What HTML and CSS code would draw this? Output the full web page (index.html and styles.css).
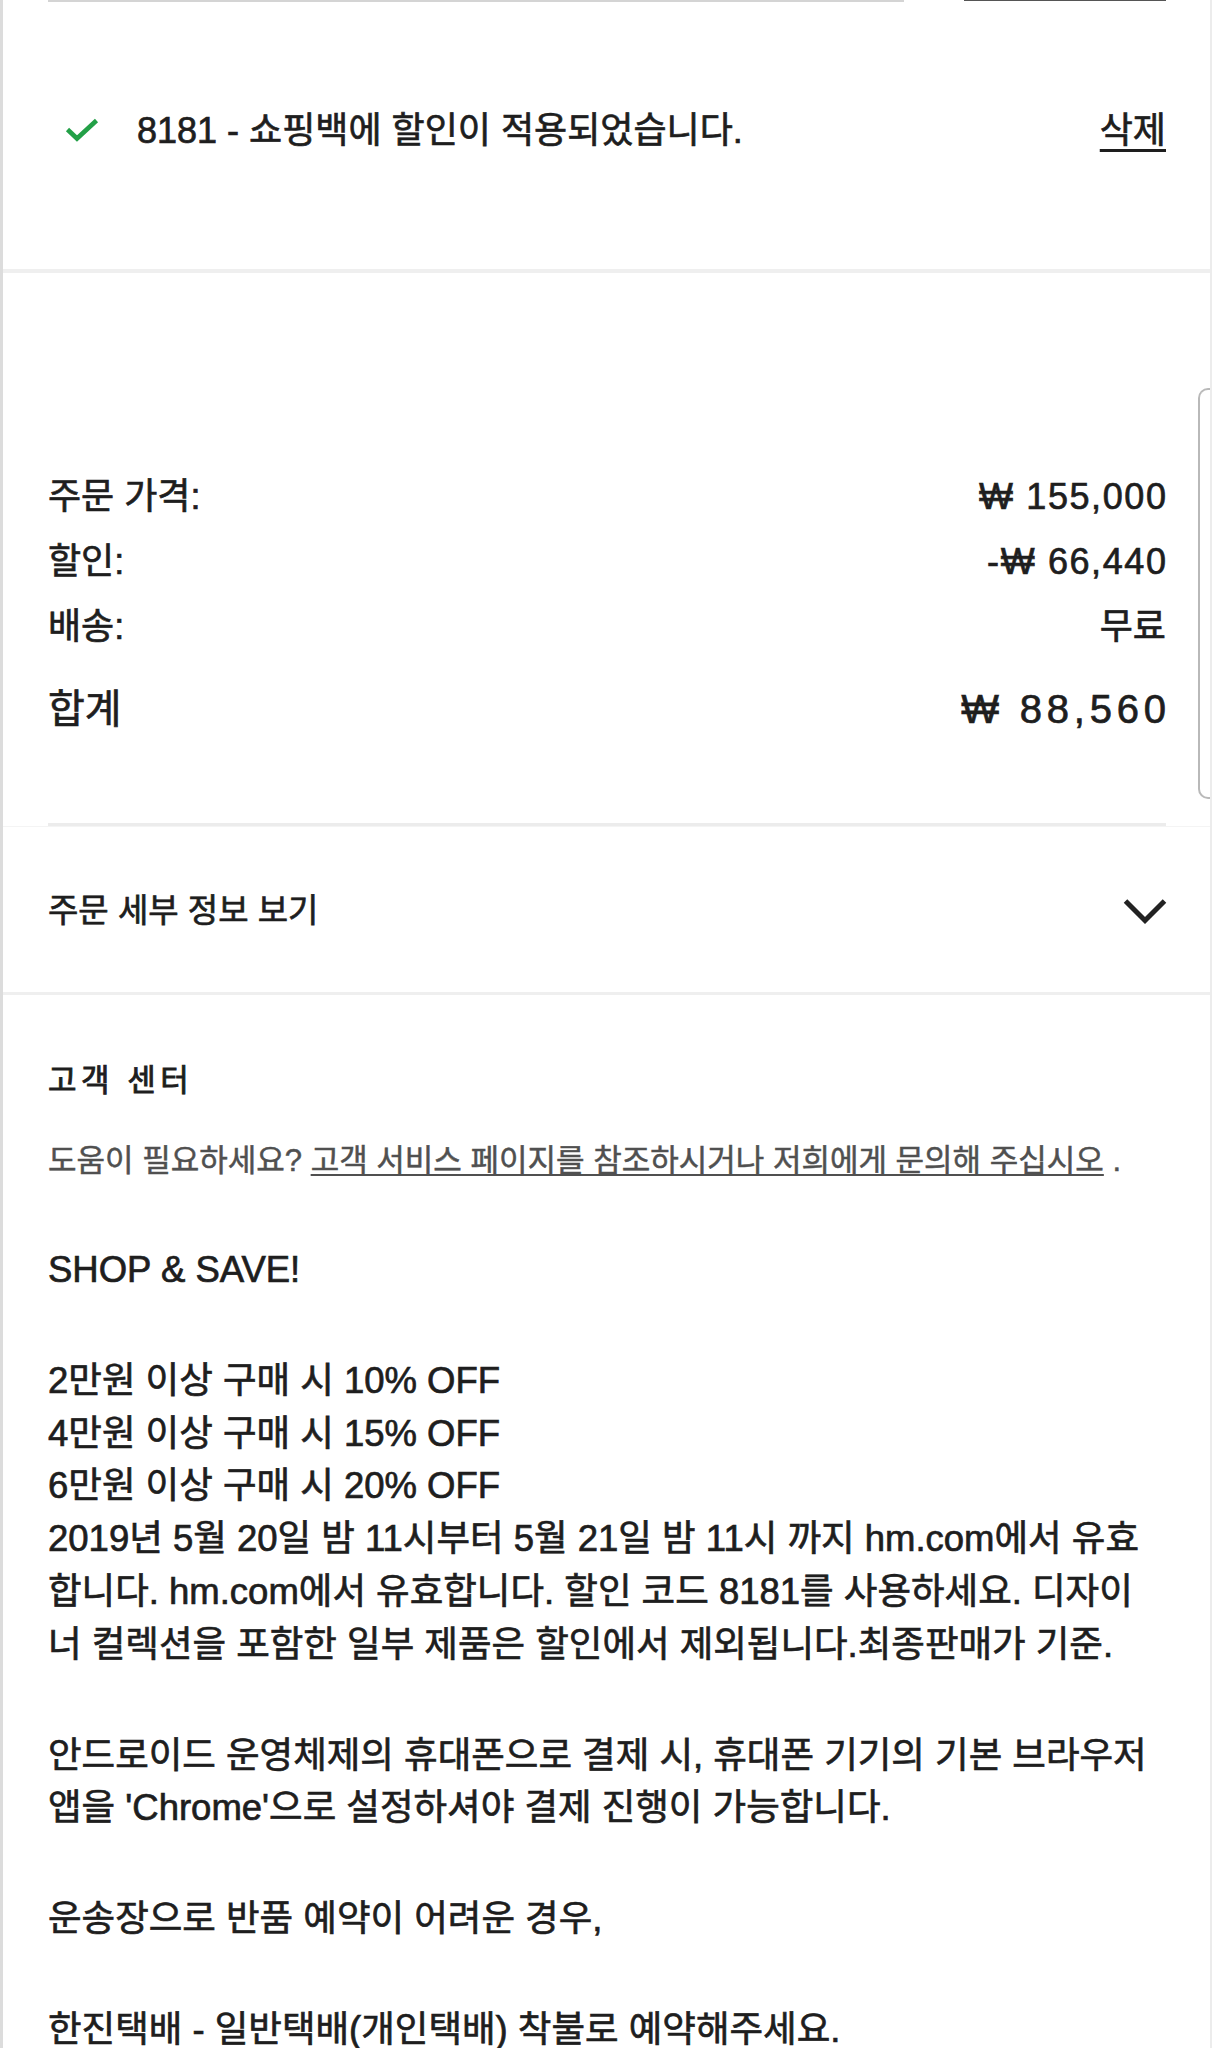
FILE: index.html
```html
<!DOCTYPE html>
<html lang="ko">
<head>
<meta charset="utf-8">
<title>H&amp;M 결제</title>
<link rel="stylesheet" href="styles.css">
</head>
<body>
<div class="page">
  <section class="coupon">
    <div class="top-edges">
      <div class="input-edge"></div>
      <div class="button-edge"></div>
    </div>
    <div class="coupon-row">
      <svg class="check" width="34" height="24" viewBox="0 0 34 24" aria-hidden="true">
        <polyline points="2.5,11.5 12,20.5 31.5,2.5" fill="none" stroke="#23a047" stroke-width="4.6" stroke-linecap="butt" stroke-linejoin="miter"/>
      </svg>
      <span class="coupon-msg">8181 - 쇼핑백에 할인이 적용되었습니다.</span>
      <a class="remove" href="#">삭제</a>
    </div>
  </section>

  <section class="summary">
    <div class="sum-row"><span>주문 가격:</span><span class="price">₩ 155,000</span></div>
    <div class="sum-row"><span>할인:</span><span class="price">-₩ 66,440</span></div>
    <div class="sum-row"><span>배송:</span><span>무료</span></div>
    <div class="sum-row total"><span>합계</span><span class="total-price">₩ 88,560</span></div>
    <div class="rule"></div>
  </section>

  <section class="details">
    <span class="details-label">주문 세부 정보 보기</span>
    <svg class="chevron" width="44" height="27" viewBox="0 0 44 27" aria-hidden="true">
      <polyline points="2.5,3 22,22.5 41.5,3" fill="none" stroke="#222" stroke-width="5"/>
    </svg>
  </section>

  <section class="help">
    <h2 class="help-title">고객 센터</h2>
    <p class="help-text">도움이 필요하세요? <a href="#" class="help-link">고객 서비스 페이지를 참조하시거나 저희에게 문의해 주십시오</a> .</p>
    <p class="para">SHOP &amp; SAVE!</p>
    <p class="para">2만원 이상 구매 시 10% OFF<br>4만원 이상 구매 시 15% OFF<br>6만원 이상 구매 시 20% OFF<br>2019년 5월 20일 밤 11시부터 5월 21일 밤 11시 까지 hm.com에서 유효<br>합니다. hm.com에서 유효합니다. 할인 코드 8181를 사용하세요. 디자이<br>너 컬렉션을 포함한 일부 제품은 할인에서 제외됩니다.최종판매가 기준.</p>
    <p class="para">안드로이드 운영체제의 휴대폰으로 결제 시, 휴대폰 기기의 기본 브라우저<br>앱을 'Chrome'으로 설정하셔야 결제 진행이 가능합니다.</p>
    <p class="para">운송장으로 반품 예약이 어려운 경우,</p>
    <p class="para">한진택배 - 일반택배(개인택배) 착불로 예약해주세요.</p>
  </section>

  <div class="edge-handle"></div>
</div>
</body>
</html>
```
FILE: styles.css
```css
html, body {
  margin: 0;
  padding: 0;
  background: #fff;
}

body {
  font-family: "Liberation Sans", "Noto Sans CJK KR", sans-serif;
  color: #1e1e1e;
  font-size: 36px;
  line-height: 52px;
  -webkit-text-stroke: 0.7px currentColor;
}

.page {
  position: relative;
  min-height: 2048px;
  border-left: 3px solid #dcdcdc;
  border-right: 2px solid #ececec;
  overflow: hidden;
}

section {
  padding: 0 44px 0 45px;
}

/* coupon block */
.coupon {
  padding-bottom: 112px;
  border-bottom: 4px solid #efefef;
}

.top-edges {
  display: flex;
  gap: 60px;
  height: 2px;
}

.input-edge {
  flex: 1;
  height: 2px;
  background: #d4d4d4;
}

.button-edge {
  width: 202px;
  height: 1px;
  background: #555;
}

.coupon-row {
  display: flex;
  align-items: center;
  margin-top: 103px;
  height: 52px;
}

.check {
  flex: none;
  margin-left: 17px;
  margin-right: 38px;
  margin-top: -2px;
}

.coupon-msg {
  flex: 1;
}

.remove {
  color: #1e1e1e;
  text-decoration: underline;
  text-decoration-thickness: 3px;
  text-underline-offset: 6px;
}

/* summary */
.summary {
  padding-top: 198px;
  border-bottom: 1px solid #f4f4f4;
}

.sum-row {
  display: flex;
  justify-content: space-between;
  height: 52px;
}

.sum-row + .sum-row {
  margin-top: 13px;
}

.sum-row.total {
  margin-top: 30px;
  font-size: 40px;
}

.price {
  letter-spacing: 1.6px;
  margin-right: -1.6px;
}

.total-price {
  letter-spacing: 4.8px;
  margin-right: -4.8px;
}

.rule {
  margin-top: 88px;
  height: 3px;
  background: #ececec;
}

/* order details toggle */
.details {
  display: flex;
  align-items: center;
  justify-content: space-between;
  padding-top: 58px;
  padding-bottom: 55px;
  border-bottom: 3px solid #efefef;
}

.details-label {
  font-size: 33px;
}

.chevron {
  flex: none;
  margin-right: -1px;
}

/* customer center */
.help {
  padding-top: 66px;
}

.help-title {
  margin: 0;
  font-size: 31px;
  font-weight: 400;
  line-height: 40px;
  letter-spacing: 4.5px;
  -webkit-text-stroke: 0.9px currentColor;
}

.help-text {
  margin: 38px 0 0;
  font-size: 31px;
  line-height: 44px;
  color: #505050;
  -webkit-text-stroke: 0.5px currentColor;
}

.help-link {
  color: #505050;
  text-decoration: underline;
  text-decoration-thickness: 2px;
  text-underline-offset: 3px;
}

.para {
  margin: 58px 0 0;
  font-size: 36.5px;
  line-height: 52.8px;
}

.help-text + .para {
  margin-top: 61px;
}

/* device edge panel handle */
.edge-handle {
  position: absolute;
  top: 388px;
  right: -2px;
  width: 12px;
  height: 407px;
  background: #fff;
  border: 2px solid #b9b9b9;
  border-right: none;
  border-radius: 10px 0 0 10px;
  -webkit-text-stroke: 0;
}
```
